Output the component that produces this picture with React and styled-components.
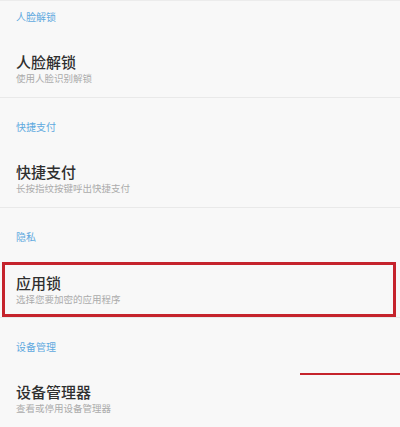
import React from 'react';
import styled, { createGlobalStyle } from 'styled-components';

const GlobalStyle = createGlobalStyle`
  html, body {
    margin: 0;
    padding: 0;
    background: #f8f8f8;
  }
  body {
    font-family: "Noto Sans CJK SC", "Noto Sans", sans-serif;
  }
`;

const Page = styled.div`
  position: relative;
  width: 400px;
  height: 427px;
  overflow: hidden;
  background: #f8f8f8;
  border-top: 1px solid #ececec;
  box-sizing: border-box;
`;

const Section = styled.section`
  display: flex;
  flex-direction: column;
  border-bottom: 1px solid #e9e9e9;
`;

const SectionHeader = styled.div`
  padding: ${(p) => (p.$first ? '10px' : '23px')} 16px 19px;
  font-size: 10px;
  line-height: 12px;
  color: #5fa9df;
`;

const Item = styled.div`
  display: flex;
  flex-direction: column;
  height: 55px;
  box-sizing: border-box;
  padding: 10px 16px 0;
  margin: 0 ${(p) => (p.$marked ? '4px' : '0')} 0 ${(p) => (p.$marked ? '2px' : '0')};
  border: ${(p) => (p.$marked ? '3px solid #c5232c' : '0')};
  padding-left: ${(p) => (p.$marked ? '11px' : '16px')};
  padding-top: ${(p) => (p.$marked ? '8px' : '10px')};
`;

const Title = styled.div`
  font-size: 15px;
  line-height: 20px;
  font-weight: 500;
  color: #2f2f2f;
`;

const Subtitle = styled.div`
  font-size: 9.5px;
  line-height: 12px;
  color: #ababab;
`;

const Mark = styled.div`
  position: absolute;
  left: 300px;
  top: 372px;
  width: 100px;
  height: 2px;
  background: #c5232c;
`;

const sections = [
  { header: '人脸解锁', title: '人脸解锁', sub: '使用人脸识别解锁' },
  { header: '快捷支付', title: '快捷支付', sub: '长按指纹按键呼出快捷支付' },
  { header: '隐私', title: '应用锁', sub: '选择您要加密的应用程序', marked: true },
  { header: '设备管理', title: '设备管理器', sub: '查看或停用设备管理器' },
];

const App = () => {
  return (
    <>
      <GlobalStyle />
      <Page>
        {sections.map((s, i) => (
          <Section key={s.header}>
            <SectionHeader $first={i === 0}>{s.header}</SectionHeader>
            <Item $marked={s.marked}>
              <Title>{s.title}</Title>
              <Subtitle>{s.sub}</Subtitle>
            </Item>
          </Section>
        ))}
        <Mark />
      </Page>
    </>
  );
};

export default App;
